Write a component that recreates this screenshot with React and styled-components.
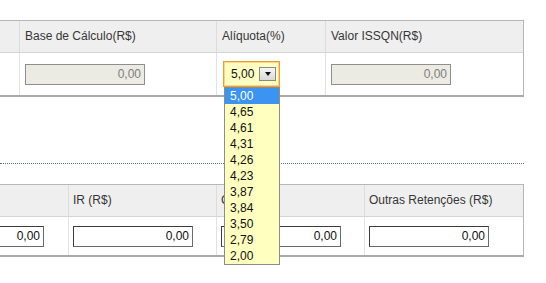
import styled, { createGlobalStyle } from 'styled-components'

const GlobalStyle = createGlobalStyle`
  html, body {
    margin: 0;
    padding: 0;
    background: #fff;
  }
  body {
    font-family: "Liberation Sans", Arial, sans-serif;
    font-size: 12px;
    color: #333;
  }
  * {
    box-sizing: border-box;
  }
`

const aliquotas = ['5,00', '4,65', '4,61', '4,31', '4,26', '4,23', '3,87', '3,84', '3,50', '2,79', '2,00']

export default function App() {
  return (
    <Page>
      <GlobalStyle />
      <Table $offset={-150}>
        <Row $cols="168px 197px 109px 198px">
          <Head $pad={5} />
          <Head $pad={5}>Base de Cálculo(R$)</Head>
          <Head $pad={5}>Alíquota(%)</Head>
          <Head $pad={5}>Valor ISSQN(R$)</Head>
        </Row>
        <Row $cols="168px 197px 109px 198px">
          <Cell $pad={5} $h={42} />
          <Cell $pad={5} $h={42}>
            <Input disabled defaultValue="0,00" />
          </Cell>
          <Cell $pad={5} $h={42}>
            <Select>
              <span>5,00</span>
              <ArrowButton />
              <DropList>
                {aliquotas.map((v, i) => (
                  <Option key={v} $active={i === 0}>{v}</Option>
                ))}
              </DropList>
            </Select>
          </Cell>
          <Cell $pad={5} $h={42}>
            <Input disabled defaultValue="0,00" />
          </Cell>
        </Row>
      </Table>

      <Divider />

      <Table $offset={-81}>
        <Row $cols="148px 148px 148px 159px">
          <Head $pad={4} />
          <Head $pad={4}>IR (R$)</Head>
          <Head $pad={4}>CSLL (R$)</Head>
          <Head $pad={4}>Outras Retenções (R$)</Head>
        </Row>
        <Row $cols="148px 148px 148px 159px">
          <Cell $pad={4} $h={38}>
            <Input defaultValue="0,00" />
          </Cell>
          <Cell $pad={4} $h={38}>
            <Input defaultValue="0,00" />
          </Cell>
          <Cell $pad={4} $h={38}>
            <Input defaultValue="0,00" />
          </Cell>
          <Cell $pad={4} $h={38}>
            <Input defaultValue="0,00" />
          </Cell>
        </Row>
      </Table>
    </Page>
  )
}

const Page = styled.div`
  width: 524px;
  min-height: 283px;
  padding-top: 20px;
`

const Table = styled.div`
  margin-left: ${p => p.$offset}px;
  border: 1px solid #b7b7b7;
  border-bottom: 2px solid #a9a9a9;
  background: #fff;
`

const Row = styled.div`
  display: grid;
  grid-template-columns: ${p => p.$cols};
  & > *:first-child {
    border-left: 0;
  }
`

const Head = styled.div`
  height: 32px;
  line-height: 31px;
  padding: 0 ${p => p.$pad}px;
  background: #efefef;
  border-left: 1px solid #dcdcdc;
  border-bottom: 1px solid #d4d4d4;
  color: #363636;
  white-space: nowrap;
  overflow: hidden;
`

const Cell = styled.div`
  height: ${p => p.$h}px;
  padding: 0 ${p => p.$pad}px;
  border-left: 1px solid #e2e2e2;
  display: flex;
  align-items: center;
`

const Input = styled.input`
  width: 120px;
  height: 21px;
  padding: 0 3px;
  margin: 0;
  font-family: "Liberation Sans", Arial, sans-serif;
  font-size: 12px;
  text-align: right;
  color: #111;
  background: #fff;
  border: 1px solid #6a6a6a;
  border-top-color: #3c3c3c;
  border-left-color: #3c3c3c;
  outline: none;

  &:disabled {
    color: #7d7d7d;
    background: #ebebe4;
    border-color: #8e8e8e;
  }
`

const Select = styled.div`
  position: relative;
  width: 57px;
  height: 26px;
  margin-left: 1px;
  display: flex;
  align-items: center;
  justify-content: space-between;
  padding: 0 3px 0 7px;
  background: #ffffc2;
  border: 1px solid #e5a236;
  box-shadow: inset 0 0 0 1px #fbd785;
  color: #111;
`

const ArrowButton = styled.div`
  width: 17px;
  height: 14px;
  border: 1px solid #8a8a8a;
  background: linear-gradient(#f7f7f7, #d9d9d9);
  display: flex;
  align-items: center;
  justify-content: center;

  &::after {
    content: '';
    border-left: 3.5px solid transparent;
    border-right: 3.5px solid transparent;
    border-top: 4px solid #111;
  }
`

const DropList = styled.div`
  position: absolute;
  top: 25px;
  left: 0;
  width: 56px;
  z-index: 10;
  background: #ffffc0;
  border: 1px solid #8c8c8c;
`

const Option = styled.div`
  height: 16px;
  line-height: 16px;
  padding-left: 5px;
  color: ${p => (p.$active ? '#fff' : '#111')};
  background: ${p => (p.$active ? '#3b93f2' : 'transparent')};
`

const Divider = styled.div`
  margin: 66px 0 20px;
  border-top: 1px dotted #4f6d8c;
`
